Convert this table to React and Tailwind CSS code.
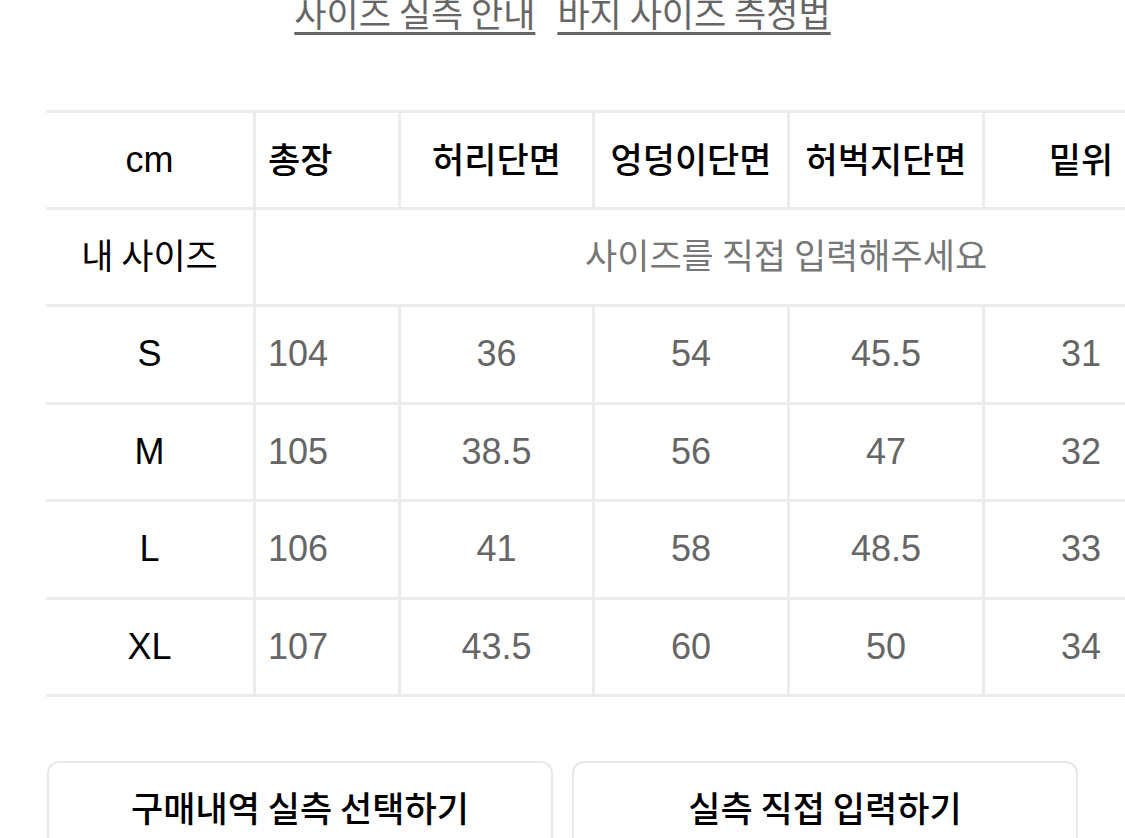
const FONT = "font-['Liberation_Sans','Noto_Sans_CJK_KR',sans-serif]";
const KR = "font-['Noto_Sans_CJK_KR','Liberation_Sans',sans-serif]";

const COLS = ["w-[207px]", "w-[145px]", "w-[194px]", "w-[195px]", "w-[195px]", "w-[195px]"];
const HEAD = ["총장", "허리단면", "엉덩이단면", "허벅지단면", "밑위"];

const ROWS = [
  ["S", "104", "36", "54", "45.5", "31"],
  ["M", "105", "38.5", "56", "47", "32"],
  ["L", "106", "41", "58", "48.5", "33"],
  ["XL", "107", "43.5", "60", "50", "34"],
];

function Cell({ i, children, className = "" }) {
  return (
    <div
      className={`${COLS[i]} shrink-0 h-full flex items-center ${
        i === 0 ? "justify-center" : i === 1 ? "justify-start pl-[12px] border-l-[3px] border-[#ececec]" : "justify-center border-l-[3px] border-[#ececec]"
      } ${className}`}
    >
      {children}
    </div>
  );
}

export default function App() {
  return (
    <div className={`w-[1125px] h-[838px] overflow-hidden bg-white ${FONT}`}>
      {/* ───────── Links ───────── */}
      <div className={`flex justify-center gap-[22px] -mt-[14px] h-[80px] ${KR} text-[35px] text-[#666]`}>
        <span className="underline decoration-[3px] underline-offset-[5px]">사이즈 실측 안내</span>
        <span className="underline decoration-[3px] underline-offset-[5px]">바지 사이즈 측정법</span>
      </div>

      {/* ───────── Size table ───────── */}
      <div className="mt-[44px] ml-[46px] w-[1131px] border-t-[3px] border-[#ececec]">
        <div className="flex h-[97px] border-b-[3px] border-[#ececec]">
          <Cell i={0} className="text-[36px] text-black">cm</Cell>
          {HEAD.map((h, idx) => (
            <Cell key={h} i={idx + 1} className={`${KR} text-[35px] font-medium text-black pb-[3px]`}>
              {h}
            </Cell>
          ))}
        </div>

        <div className="flex h-[97px] border-b-[3px] border-[#ececec]">
          <Cell i={0} className={`${KR} text-[35px] text-black pb-[5px]`}>내 사이즈</Cell>
          <div className={`flex-1 h-full border-l-[3px] border-[#ececec] flex items-center pl-[329px] pb-[6px] ${KR} text-[35px] text-[#777]`}>
            사이즈를 직접 입력해주세요
          </div>
        </div>

        {ROWS.map((r) => (
          <div key={r[0]} className="flex h-[97.5px] border-b-[3px] border-[#ececec]">
            {r.map((v, i) => (
              <Cell key={i} i={i} className={`text-[36px] ${i === 0 ? "text-black" : "text-[#666]"}`}>
                {v}
              </Cell>
            ))}
          </div>
        ))}
      </div>

      {/* ───────── Buttons ───────── */}
      <div className="grid grid-cols-2 gap-[19px] px-[47px] mt-[64px]">
        <div className={`h-[120px] rounded-[12px] border-2 border-[#e8e8e8] flex justify-center pt-[18px] ${KR} text-[35px] font-medium text-black`}>
          구매내역 실측 선택하기
        </div>
        <div className={`h-[120px] rounded-[12px] border-2 border-[#e8e8e8] flex justify-center pt-[18px] ${KR} text-[35px] font-medium text-black`}>
          실측 직접 입력하기
        </div>
      </div>
    </div>
  );
}
